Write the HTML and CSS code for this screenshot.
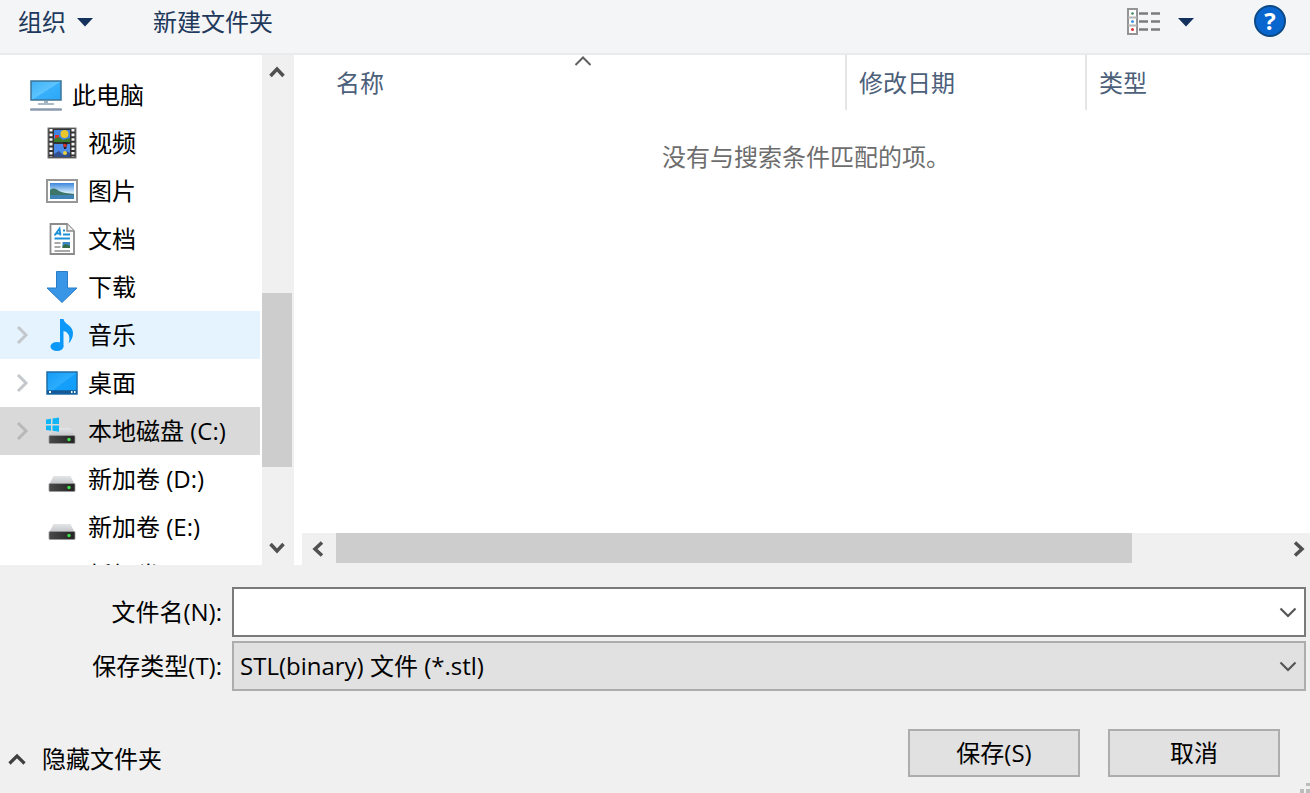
FILE: index.html
```html
<!DOCTYPE html>
<html lang="zh-CN">
<head>
<meta charset="utf-8">
<title>另存为</title>
<meta name="viewport" content="width=device-width, initial-scale=1">
<link rel="stylesheet" href="styles.css">
</head>
<body>
<svg class="defs" aria-hidden="true">
  <defs>
    <linearGradient id="g-screen" x1="0" y1="0" x2="1" y2="1"><stop offset="0" stop-color="#3fb0f5"/><stop offset=".5" stop-color="#5cc4ff"/><stop offset=".52" stop-color="#38b0fb"/><stop offset="1" stop-color="#2ba6f7"/></linearGradient>
    <linearGradient id="g-desk" x1="0" y1="0" x2="1" y2="1"><stop offset="0" stop-color="#149bf5"/><stop offset=".5" stop-color="#2cadff"/><stop offset=".52" stop-color="#149ffb"/><stop offset="1" stop-color="#0f9cfa"/></linearGradient>
    <linearGradient id="g-sky" x1="0" y1="0" x2="0" y2="1"><stop offset="0" stop-color="#3b86dc"/><stop offset=".6" stop-color="#d3ebfa"/><stop offset="1" stop-color="#7fb0d4"/></linearGradient>
    <linearGradient id="g-lid" x1="0" y1="0" x2="0" y2="1"><stop offset="0" stop-color="#e4e5e7"/><stop offset="1" stop-color="#c3c5c9"/></linearGradient>
    <linearGradient id="g-drive" x1="0" y1="0" x2="1" y2="0"><stop offset="0" stop-color="#4a4a4a"/><stop offset="1" stop-color="#242424"/></linearGradient>
    <symbol id="drive" viewBox="0 0 32 32">
      <path d="M7.500 13h17l4 8H3.500z" fill="url(#g-lid)"/>
      <rect x="3" y="20.500" width="26" height="8" rx="1" fill="url(#g-drive)" stroke="#999" stroke-width=".8"/>
      <circle cx="23" cy="24.500" r="1.700" fill="#3fe048"/>
    </symbol>
    <symbol id="chev-right" viewBox="0 0 16 20"><path d="M4 2l8 8-8 8" fill="none" stroke="currentColor" stroke-width="3"/></symbol>
  </defs>
</svg>

<header class="toolbar">
  <button class="tool" type="button">组织
    <svg class="caret" viewBox="0 0 16 10"><path d="M0 1h16L8 9.500z" fill="#14305c"/></svg>
  </button>
  <button class="tool" type="button">新建文件夹</button>
  <span class="spacer"></span>
  <button class="tool view" type="button" aria-label="更改视图">
    <svg width="34" height="28" viewBox="0 0 34 28">
      <rect x="1" y="1" width="9" height="25" fill="#fff" stroke="#949494" stroke-width="2"/>
      <path d="M1 9.500h9M1 17.500h9" stroke="#b4b4b4" stroke-width="2"/>
      <circle cx="5.500" cy="5.500" r="1.300" fill="#3b8a5a"/><circle cx="5.500" cy="13.500" r="1.500" fill="#3c94e8"/><circle cx="5.500" cy="21.500" r="1.500" fill="#e03030"/>
      <path d="M12 5.500h9M24 5.500h9M12 13.500h9M24 13.500h9M12 21.500h9M24 21.500h9" stroke="#7c7c7c" stroke-width="2.500"/>
    </svg>
    <svg class="caret" viewBox="0 0 16 10"><path d="M0 1h16L8 9.500z" fill="#14305c"/></svg>
  </button>
  <button class="help" type="button" aria-label="帮助">?</button>
</header>

<main class="browser">
  <nav class="sidebar">
    <ul class="tree">
      <li><button class="node root" type="button"><span class="twist"></span>
        <svg class="icon" viewBox="0 0 32 32"><rect x="1" y="2" width="30" height="19" fill="url(#g-screen)" stroke="#3c7396" stroke-width="1.500"/><path d="M14 22h4v2h-4z" fill="#9fb0bf"/><path d="M8 25h16" stroke="#8fa3b5" stroke-width="1.500"/><path d="M1 30.500h30" stroke="#8b9bb0" stroke-width="2.500" stroke-linecap="round"/></svg>此电脑</button></li>
      <li><button class="node" type="button"><span class="twist"></span>
        <svg class="icon" viewBox="0 0 32 32"><rect x="2" y="1" width="28" height="30" fill="#333" stroke="#777"/><rect x="8" y="3" width="16" height="12" fill="#3f83e6"/><rect x="8" y="17" width="16" height="13" fill="#4a8ae8"/><circle cx="18.500" cy="7" r="4" fill="#e9c62c"/><path d="M9 8h4v4H9z" fill="#d9342b"/><path d="M8 12l5-2 4 3 7-2v4H8z" fill="#3a7c2c"/><path d="M17 15h5l-2 7h-2z" fill="#222"/><circle cx="19" cy="18.500" r="1.800" fill="#c33"/><path d="M8 27l5-3 4 4 3-4 4 2v4H8z" fill="#314f8f"/><circle cx="19" cy="26" r="2" fill="#e5d03b"/><path d="M5 2v28M27 2v28" stroke="#f5f5f5" stroke-width="3" stroke-dasharray="2.600 2"/></svg>视频</button></li>
      <li><button class="node" type="button"><span class="twist"></span>
        <svg class="icon" viewBox="0 0 32 32"><rect x="1" y="5" width="30" height="22" fill="#fff" stroke="#979797" stroke-width="2"/><rect x="4" y="8" width="24" height="16" fill="url(#g-sky)"/><path d="M4 15c4-3 6-1 9 1 4 2 9 2 15 3v2H4z" fill="#3d7568"/><path d="M4 20h24v4H4z" fill="#3f83b5"/></svg>图片</button></li>
      <li><button class="node" type="button"><span class="twist"></span>
        <svg class="icon" viewBox="0 0 32 32"><path d="M4.500 1H21l7 7v23H4.500z" fill="#fff" stroke="#8b8b8b" stroke-width="1.800"/><path d="M21 1v7h7" fill="#eee" stroke="#8b8b8b" stroke-width="1.500"/><path d="M8.500 12.500l5-7 1 7M10 10.500h5" fill="none" stroke="#1c90d8" stroke-width="1.800"/><path d="M17 7.500h2M17 11.500h7M8.500 15.500h15.500" stroke="#1c90d8" stroke-width="2"/><path d="M8.500 20h6M8.500 24h6M8.500 28h15.500" stroke="#8c8c8c" stroke-width="1.500"/><path d="M16.500 19h7.500v6h-7.500z" fill="#3d87c0"/><path d="M16.500 23l3-2 4.500 2v2h-7.500z" fill="#356b49"/></svg>文档</button></li>
      <li><button class="node" type="button"><span class="twist"></span>
        <svg class="icon" viewBox="0 0 32 32"><path d="M10.500 0.500h11V17h9.500L16 31.500 1 17h9.500z" fill="#3996e6" stroke="#2b7cc6"/></svg>下载</button></li>
      <li><button class="node hover" type="button"><span class="twist"><svg><use href="#chev-right"/></svg></span>
        <svg class="icon" viewBox="0 0 32 32"><ellipse cx="11" cy="27.500" rx="6.500" ry="4.500" fill="#0c98f8"/><path d="M14 0h3.500c.5 5 9.500 6.500 9.500 14 0 4-1.500 8-4.500 10.500C25 17 22 13 17.500 12v15.500H14z" fill="#0c98f8"/></svg>音乐</button></li>
      <li><button class="node" type="button"><span class="twist"><svg><use href="#chev-right"/></svg></span>
        <svg class="icon" viewBox="0 0 32 32"><rect x="1" y="5" width="30" height="22" fill="url(#g-desk)" stroke="#1c6ea8" stroke-width="1.500"/><path d="M1 25h30" stroke="#155a96" stroke-width="3.500"/><path d="M3 25h2M25 25h1.500M28 25h1.500" stroke="#fff" stroke-width="1.800"/></svg>桌面</button></li>
      <li><button class="node selected" type="button" aria-current="true"><span class="twist"><svg><use href="#chev-right"/></svg></span>
        <svg class="icon" viewBox="0 0 32 32"><use href="#drive"/><path d="M0 4.500l5-.7V9H0zM6.500 3.600L13 2.500V9H6.500zM0 10.500h5v5.200L0 15zM6.500 10.500H13v6.300l-6.500-1z" fill="#12b5f5"/></svg>本地磁盘 (C:)</button></li>
      <li><button class="node" type="button"><span class="twist"></span>
        <svg class="icon"><use href="#drive"/></svg>新加卷 (D:)</button></li>
      <li><button class="node" type="button"><span class="twist"></span>
        <svg class="icon"><use href="#drive"/></svg>新加卷 (E:)</button></li>
      <li><button class="node" type="button"><span class="twist"></span>
        <svg class="icon"><use href="#drive"/></svg>新加卷 (F:)</button></li>
    </ul>
    <div class="vscroll">
      <button type="button" aria-label="向上滚动"><svg width="16" height="14" viewBox="0 0 16 14"><path d="M1.500 11L8 4l6.500 7" fill="none" stroke="#505050" stroke-width="3.500"/></svg></button>
      <span class="thumb"></span>
      <button type="button" aria-label="向下滚动"><svg width="16" height="14" viewBox="0 0 16 14"><path d="M1.500 3L8 10l6.500-7" fill="none" stroke="#505050" stroke-width="3.500"/></svg></button>
    </div>
  </nav>

  <section class="pane">
    <table class="files">
      <colgroup><col><col class="col-date"><col class="col-type"></colgroup>
      <thead>
        <tr>
          <th class="name" scope="col">名称<svg class="sort" width="18" height="12" viewBox="0 0 18 12"><path d="M1.500 10L9 2.500 16.500 10" fill="none" stroke="#606060" stroke-width="2"/></svg></th>
          <th scope="col">修改日期</th>
          <th scope="col">类型</th>
        </tr>
      </thead>
      <tbody><tr><td colspan="3">没有与搜索条件匹配的项。</td></tr></tbody>
    </table>
    <div class="hscroll">
      <button type="button" aria-label="向左滚动"><svg width="14" height="16" viewBox="0 0 14 16"><path d="M11 1.500L4 8l7 6.500" fill="none" stroke="#505050" stroke-width="3.500"/></svg></button>
      <span class="thumb"></span>
      <button type="button" aria-label="向右滚动"><svg width="14" height="16" viewBox="0 0 14 16"><path d="M3 1.500L10 8l-7 6.500" fill="none" stroke="#505050" stroke-width="3.500"/></svg></button>
    </div>
  </section>
</main>

<form class="footer">
  <div class="fields">
    <label for="filename">文件名(N):</label>
    <div class="combo">
      <input id="filename" type="text">
      <svg class="drop" width="18" height="12" viewBox="0 0 18 12"><path d="M1.500 1.500L9 9l7.500-7.500" fill="none" stroke="#555" stroke-width="2.200"/></svg>
    </div>
    <label for="filetype">保存类型(T):</label>
    <div class="combo">
      <select id="filetype"><option>STL(binary) 文件 (*.stl)</option></select>
      <svg class="drop" width="18" height="12" viewBox="0 0 18 12"><path d="M1.500 1.500L9 9l7.500-7.500" fill="none" stroke="#555" stroke-width="2.200"/></svg>
    </div>
  </div>
  <div class="actions">
    <button class="hide" type="button"><svg width="18" height="14" viewBox="0 0 18 14"><path d="M1.500 11.500L9 4l7.500 7.500" fill="none" stroke="#404040" stroke-width="3.200"/></svg>隐藏文件夹</button>
    <span class="spacer"></span>
    <button class="push" type="submit">保存(S)</button>
    <button class="push" type="button">取消</button>
  </div>
  <svg class="grip" width="10" height="10" viewBox="0 0 10 10"><path d="M6 0h4v3H6zM0 6h4v4H0zM6 6h4v4H6z" fill="#bcbcbc"/></svg>
</form>
</body>
</html>
```
FILE: styles.css
```css
* { box-sizing: border-box; }

body {
  margin: 0;
  height: 100vh;
  display: flex;
  flex-direction: column;
  overflow: hidden;
  background: #f0f0f0;
  color: #000;
  font: 24px/32px "Open Sans", "Noto Sans CJK SC", sans-serif;
}

button, input, select {
  font: inherit;
  color: inherit;
  margin: 0;
  padding: 0;
  border: 0;
  border-radius: 0;
  background: none;
}

svg { flex: none; display: block; }
.defs { position: absolute; width: 0; height: 0; }
.spacer { flex: 1; }

/* Toolbar */
.toolbar {
  display: flex;
  align-items: flex-start;
  padding: 5px 24px 15px 18px;
  border-bottom: 2px solid #e8eaec;
  background: #f4f5f7;
}
.tool {
  display: flex;
  align-items: center;
  gap: 11px;
  height: 33px;
  margin-right: 60px;
  color: #1e395b;
}
.tool.view { gap: 17px; }
.caret { width: 16px; height: 10px; }
.help {
  width: 32px;
  height: 32px;
  border: 2px solid #0b4a86;
  border-radius: 50%;
  background: #0a66cf;
  color: #fff;
  font-weight: 700;
  line-height: 28px;
}

/* Browser area */
.browser {
  flex: 1;
  min-height: 0;
  display: flex;
  background: #fff;
}
.sidebar {
  width: 294px;
  display: flex;
  justify-content: space-between;
  overflow: hidden;
  flex: none;
}
.tree {
  width: 260px;
  margin: 0;
  padding: 16px 0 0;
  list-style: none;
}
.node {
  display: flex;
  align-items: center;
  width: 100%;
  height: 48px;
  padding-left: 14px;
  text-align: left;
  white-space: nowrap;
}
.twist { width: 32px; color: #c4c8cc; }
.root .twist { width: 16px; }
.twist svg { width: 16px; height: 20px; }
.icon { width: 32px; height: 32px; margin-right: 10px; }
.hover { background: #e5f3ff; }
.selected { background: #d9d9d9; }
.selected .twist { color: #b8b8b8; }

/* Scroll bars */
.vscroll, .hscroll { display: grid; background: #f0f0f0; }
.vscroll {
  width: 32px;
  grid-template-rows: 34px 204fr 174fr 64fr 34px;
}
.vscroll .thumb { grid-row: 3; margin-right: 2px; }
.vscroll button:last-child { grid-row: 5; }
.vscroll button { padding-left: 7px; }
.thumb { background: #cdcdcd; }
.hscroll {
  height: 32px;
  grid-template-columns: 34px 796fr 156fr 22px;
}
.hscroll .thumb { margin-bottom: 2px; }
.hscroll button { padding-left: 9px; }
.hscroll button:last-child { grid-column: 4; padding-left: 4px; }

/* File list */
.pane {
  flex: 1;
  min-width: 0;
  margin-left: 8px;
  display: flex;
  flex-direction: column;
  justify-content: space-between;
}
.files {
  width: 100%;
  table-layout: fixed;
  border-collapse: collapse;
}
.col-date { width: 240px; }
.col-type { width: 224px; }
.files th {
  position: relative;
  height: 55px;
  padding: 0 0 0 12px;
  border-right: 2px solid #e5e5e5;
  color: #4c607a;
  font-weight: 400;
  text-align: left;
}
.files th:last-child { border-right: 0; }
.files th.name { padding-left: 34px; }
.sort { position: absolute; top: 0; left: 50%; }
.files td {
  padding: 31px 0 0;
  color: #6d6d6d;
  text-align: center;
}

/* Name, type and actions */
.footer { position: relative; padding: 22px 4px 16px 0; }
.fields {
  display: grid;
  grid-template-columns: 222px 1fr;
  gap: 4px 10px;
  align-items: center;
}
.fields label { text-align: right; }
.combo { position: relative; }
.combo input, .combo select {
  display: block;
  width: 100%;
  height: 50px;
  padding: 0 40px 0 6px;
  border: 2px solid #7a7a7a;
  background: #fff;
}
.combo select {
  appearance: none;
  border-color: #adadad;
  background: #e1e1e1;
}
.drop {
  position: absolute;
  right: 9px;
  top: 20px;
  pointer-events: none;
}
.actions {
  display: flex;
  align-items: flex-end;
  gap: 28px;
  padding: 38px 26px 0 8px;
}
.hide {
  display: flex;
  align-items: center;
  gap: 16px;
  height: 36px;
}
.push {
  width: 172px;
  height: 48px;
  border: 2px solid #adadad;
  background: #e1e1e1;
}
.grip { position: absolute; right: 0; bottom: 0; }
```
